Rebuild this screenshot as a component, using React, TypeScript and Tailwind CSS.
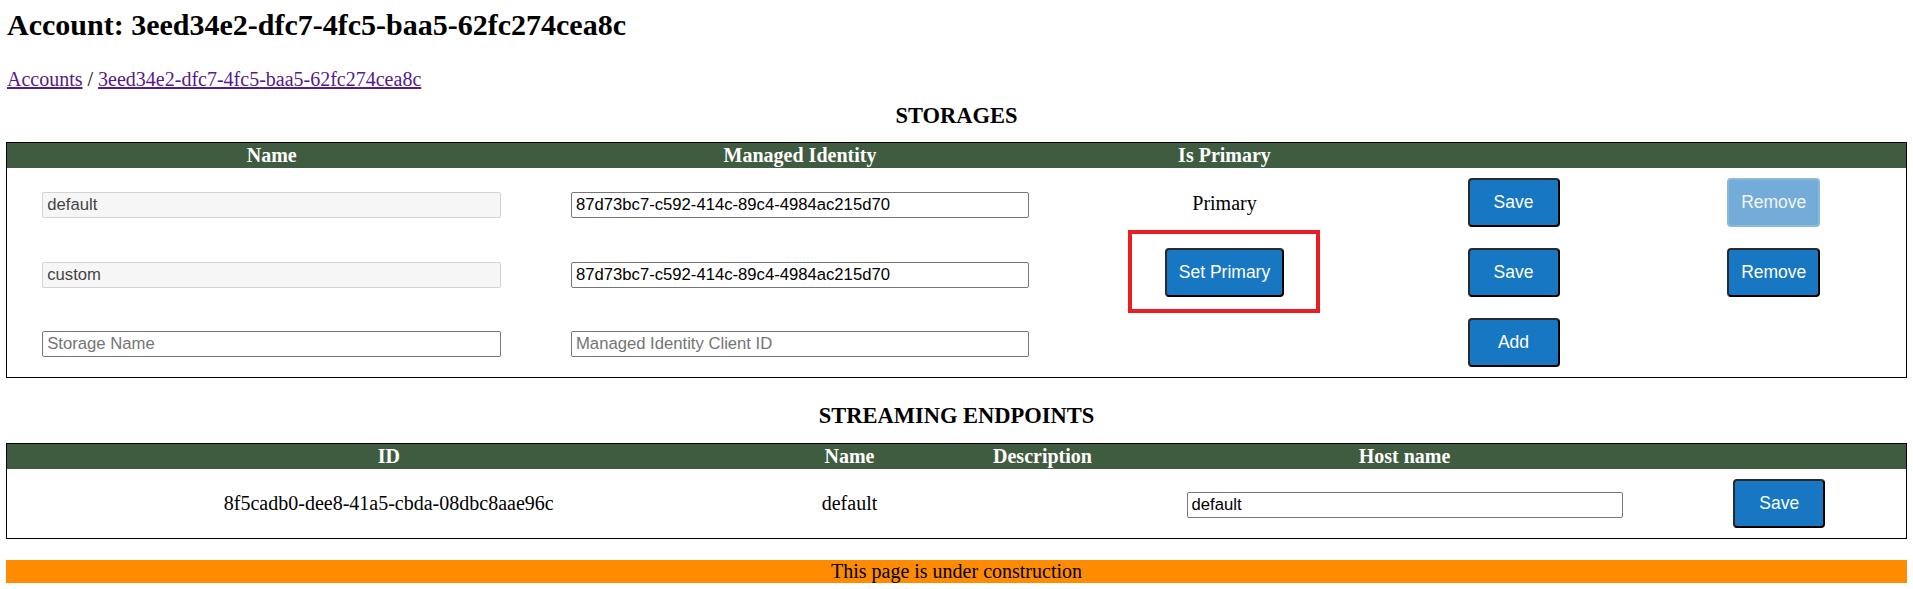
import React from 'react';

const serif = "font-['Liberation_Serif','Times_New_Roman',serif]";
const sans = "font-['Liberation_Sans',Arial,sans-serif]";

const Btn: React.FC<{ label: string; disabled?: boolean }> = ({ label, disabled }) => (
  <button
    disabled={disabled}
    className={
      `${sans} h-[49px] min-w-[92px] px-3 rounded-[4px] border-2 text-[17.5px] ` +
      (disabled
        ? 'bg-[#73acd8] border-[#8cb8da] text-[#f2f6fa]'
        : 'bg-[#1777c3] border-[#2a2a2a] border-b-black border-r-black text-white')
    }
  >
    {label}
  </button>
);

const TextBox: React.FC<{ value?: string; placeholder?: string; readOnly?: boolean; width: string }> = ({
  value,
  placeholder,
  readOnly,
  width,
}) => (
  <input
    readOnly={readOnly}
    defaultValue={value}
    placeholder={placeholder}
    className={
      `${sans} ${width} h-[26px] px-[4px] text-[16.67px] rounded-[2px] border outline-none placeholder:text-[#757575] ` +
      (readOnly ? 'bg-[#f6f6f6] border-[#d3d3d3] text-[#444]' : 'bg-white border-[#767676] text-black')
    }
  />
);

const storages = [
  { name: 'default', mi: '87d73bc7-c592-414c-89c4-4984ac215d70', primary: true },
  { name: 'custom', mi: '87d73bc7-c592-414c-89c4-4984ac215d70', primary: false },
];

export default function App() {
  return (
    <div className={`${serif} bg-white text-black min-h-[589px] px-[6px] pt-[8px] text-[20px]`}>
      <h1 className="text-[30px] font-bold leading-[34px] pl-[1px]">Account: 3eed34e2-dfc7-4fc5-baa5-62fc274cea8c</h1>

      <div className="mt-[26px] leading-[23px] pl-[1px]">
        <a href="#" className="text-[#551a8b] underline">Accounts</a> /{' '}
        <a href="#" className="text-[#551a8b] underline">3eed34e2-dfc7-4fc5-baa5-62fc274cea8c</a>
      </div>

      <h3 className="mt-[12px] text-[22.5px] font-bold leading-[25px] text-center">STORAGES</h3>

      <table className="mt-[14px] w-full table-fixed border-collapse border border-black">
        <colgroup>
          <col className="w-[530px]" />
          <col className="w-[527px]" />
          <col className="w-[322px]" />
          <col className="w-[256px]" />
          <col />
        </colgroup>
        <thead>
          <tr className="bg-[#3f5b40] text-white h-[25px]">
            <th className="font-bold leading-[22px]">Name</th>
            <th className="font-bold leading-[22px]">Managed Identity</th>
            <th className="font-bold leading-[22px]">Is Primary</th>
            <th />
            <th />
          </tr>
        </thead>
        <tbody>
          {storages.map((s) => (
            <tr key={s.name} className="h-[70px]">
              <td className="text-center">
                <TextBox value={s.name} readOnly width="w-[459px]" />
              </td>
              <td className="text-center">
                <TextBox value={s.mi} width="w-[458px]" />
              </td>
              <td className="text-center">
                {s.primary ? (
                  <span>Primary</span>
                ) : (
                  <div className="relative inline-block">
                    <Btn label="Set Primary" />
                    <div className="absolute -left-[37px] -right-[36px] -top-[18px] -bottom-[16px] border-4 border-[#ec1c24] pointer-events-none" />
                  </div>
                )}
              </td>
              <td className="text-center">
                <Btn label="Save" />
              </td>
              <td className="text-center">
                <Btn label="Remove" disabled={s.primary} />
              </td>
            </tr>
          ))}
          <tr className="h-[70px]">
            <td className="text-center">
              <TextBox placeholder="Storage Name" width="w-[459px]" />
            </td>
            <td className="text-center">
              <TextBox placeholder="Managed Identity Client ID" width="w-[458px]" />
            </td>
            <td />
            <td className="text-center">
              <Btn label="Add" />
            </td>
            <td />
          </tr>
        </tbody>
      </table>

      <h3 className="mt-[25px] text-[22.5px] font-bold leading-[25px] text-center">STREAMING ENDPOINTS</h3>

      <table className="mt-[15px] w-full table-fixed border-collapse border border-black">
        <colgroup>
          <col className="w-[764px]" />
          <col className="w-[158px]" />
          <col className="w-[228px]" />
          <col className="w-[496px]" />
          <col />
        </colgroup>
        <thead>
          <tr className="bg-[#3f5b40] text-white h-[25px]">
            <th className="font-bold leading-[22px]">ID</th>
            <th className="font-bold leading-[22px]">Name</th>
            <th className="font-bold leading-[22px]">Description</th>
            <th className="font-bold leading-[22px]">Host name</th>
            <th />
          </tr>
        </thead>
        <tbody>
          <tr className="h-[70px]">
            <td className="text-center">8f5cadb0-dee8-41a5-cbda-08dbc8aae96c</td>
            <td className="text-center">default</td>
            <td />
            <td className="text-center">
              <TextBox value="default" width="w-[436px]" />
            </td>
            <td className="text-center">
              <Btn label="Save" />
            </td>
          </tr>
        </tbody>
      </table>

      <div className="mt-[21px] h-[23px] bg-[#ff8c00] text-center leading-[23px]">This page is under construction</div>
    </div>
  );
}
